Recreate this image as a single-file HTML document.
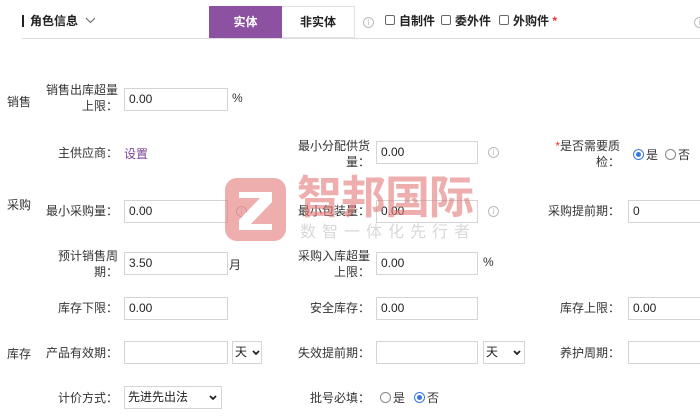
<!DOCTYPE html><html><head><meta charset="utf-8"><style>
*{margin:0;padding:0;box-sizing:border-box}
body{width:700px;height:416px;overflow:hidden;background:#fff;position:relative;font-family:"Liberation Sans","Noto Sans CJK SC",sans-serif;font-size:12px;color:#333}
.a{position:absolute;white-space:nowrap}
.r{position:absolute;text-align:right;line-height:16px}
.in{position:absolute;height:23px;border:1px solid #d5d5d5;background:#fff;padding-left:4px;line-height:21px;font-size:12px;color:#222}
.i{position:absolute;width:11px;height:11px;border:1px solid #bbb;border-radius:50%;font-size:8px;color:#bbb;text-align:center;line-height:9px}
.cb{position:absolute;width:10px;height:10px;border:1px solid #666;border-radius:2px}
.rd{position:absolute;width:11px;height:11px;border:1px solid #888;border-radius:50%}
.rd.on{border-color:#3a78e0}
.rd.on:after{content:"";position:absolute;left:2px;top:2px;width:5px;height:5px;border-radius:50%;background:#3a78e0}
.ar{position:absolute;top:8px}
</style></head><body>
<div class="a" style="left:22px;top:15px;width:2px;height:12px;background:#222"></div>
<div class="a" style="left:30px;top:12px;font-weight:bold;color:#222">角色信息</div>
<svg class="a" style="left:85px;top:17px" width="11" height="7"><path d="M1 1L5.5 5.5L10 1" fill="none" stroke="#666" stroke-width="1"/></svg>
<div class="a" style="left:209px;top:6px;width:73px;height:32px;background:#8c52a1;color:#fff;text-align:center;line-height:32px;font-weight:bold">实体</div>
<div class="a" style="left:282px;top:6px;width:73px;height:32px;border:1px solid #e2e2e2;border-left:none;color:#222;text-align:center;line-height:30px;font-weight:bold">非实体</div>
<div class="i" style="left:363px;top:17px">i</div>
<div class="cb" style="left:385px;top:15px"></div><div class="a" style="left:399px;top:12px;font-weight:bold;color:#222">自制件</div>
<div class="cb" style="left:441px;top:15px"></div><div class="a" style="left:455px;top:12px;font-weight:bold;color:#222">委外件</div>
<div class="cb" style="left:499px;top:15px"></div><div class="a" style="left:513px;top:12px;font-weight:bold;color:#222">外购件 <span style="color:#e33">*</span></div>
<div class="i" style="left:694px;top:17px">i</div>
<div class="a" style="left:22px;top:38px;width:678px;height:1px;background:#ddd"></div>

<div class="a" style="left:7px;top:93px">销售</div>
<div class="r" style="left:30px;top:82px;width:88px">销售出库超量<br>上限：</div>
<div class="in" style="left:124px;top:88px;width:104px">0.00</div>
<div class="a" style="left:232px;top:91px">%</div>

<div class="r" style="left:30px;top:145px;width:88px">主供应商：</div>
<div class="a" style="left:124px;top:145px;color:#7a3f96">设置</div>
<div class="r" style="left:280px;top:138px;width:90px">最小分配供货<br>量：</div>
<div class="in" style="left:376px;top:141px;width:102px">0.00</div>
<div class="i" style="left:488px;top:147px">i</div>
<div class="r" style="left:530px;top:138px;width:90px"><span style="color:#e33">*</span>是否需要质<br>检：</div>
<div class="rd on" style="left:633px;top:149px"></div><div class="a" style="left:646px;top:146px">是</div>
<div class="rd" style="left:665px;top:149px"></div><div class="a" style="left:678px;top:146px">否</div>

<div class="a" style="left:7px;top:196px">采购</div>
<div class="r" style="left:30px;top:203px;width:88px">最小采购量：</div>
<div class="in" style="left:124px;top:200px;width:104px">0.00</div>
<div class="i" style="left:236px;top:206px">i</div>
<div class="r" style="left:280px;top:203px;width:90px">最小包装量：</div>
<div class="in" style="left:376px;top:200px;width:102px">0.00</div>
<div class="i" style="left:488px;top:206px">i</div>
<div class="r" style="left:530px;top:203px;width:90px">采购提前期：</div>
<div class="in" style="left:628px;top:200px;width:80px">0</div>

<div class="r" style="left:30px;top:248px;width:88px">预计销售周<br>期：</div>
<div class="in" style="left:124px;top:252px;width:104px">3.50</div>
<div class="a" style="left:229px;top:256px">月</div>
<div class="r" style="left:280px;top:248px;width:90px">采购入库超量<br>上限：</div>
<div class="in" style="left:376px;top:252px;width:102px">0.00</div>
<div class="a" style="left:483px;top:255px">%</div>

<div class="r" style="left:30px;top:300px;width:88px">库存下限：</div>
<div class="in" style="left:124px;top:297px;width:104px">0.00</div>
<div class="r" style="left:280px;top:300px;width:90px">安全库存：</div>
<div class="in" style="left:376px;top:297px;width:102px">0.00</div>
<div class="r" style="left:530px;top:300px;width:90px">库存上限：</div>
<div class="in" style="left:628px;top:297px;width:80px">0.00</div>

<div class="a" style="left:7px;top:345px">库存</div>
<div class="r" style="left:30px;top:345px;width:88px">产品有效期：</div>
<div class="in" style="left:124px;top:341px;width:104px"></div>
<div class="in" style="left:232px;top:341px;width:30px;padding-left:2px">天<svg class="ar" style="left:19px" width="8" height="6"><path d="M1 1L4 4L7 1" fill="none" stroke="#222" stroke-width="1.8"/></svg></div>
<div class="r" style="left:280px;top:345px;width:90px">失效提前期：</div>
<div class="in" style="left:376px;top:341px;width:102px"></div>
<div class="in" style="left:483px;top:341px;width:42px;padding-left:2px">天<svg class="ar" style="left:29px" width="8" height="6"><path d="M1 1L4 4L7 1" fill="none" stroke="#222" stroke-width="1.8"/></svg></div>
<div class="r" style="left:530px;top:345px;width:90px">养护周期：</div>
<div class="in" style="left:628px;top:341px;width:80px"></div>

<div class="r" style="left:30px;top:390px;width:88px">计价方式：</div>
<div class="in" style="left:124px;top:386px;width:98px;padding-left:3px">先进先出法<svg class="ar" style="left:84px" width="8" height="6"><path d="M1 1L4 4L7 1" fill="none" stroke="#222" stroke-width="1.8"/></svg></div>
<div class="r" style="left:280px;top:390px;width:90px">批号必填：</div>
<div class="rd" style="left:380px;top:392px"></div><div class="a" style="left:393px;top:389px">是</div>
<div class="rd on" style="left:414px;top:392px"></div><div class="a" style="left:427px;top:389px">否</div>

<div class="a" style="left:225px;top:178px;width:61px;height:63px;border-radius:12px;background:rgba(226,120,120,.6)">
<svg width="61" height="63" viewBox="0 0 61 63"><path d="M14 14H47V24L26 46H47V52H14V42L35 20H14Z" fill="#fff"/></svg></div>
<div class="a" style="left:297px;top:172px;font-size:45px;line-height:52px;color:rgba(226,120,120,.6);font-weight:bold;letter-spacing:-1px">智邦国际</div>
<div class="a" style="left:300px;top:222px;font-size:16px;line-height:22px;color:rgba(190,190,190,.6);letter-spacing:6px">数智一体化先行者</div>
</body></html>
